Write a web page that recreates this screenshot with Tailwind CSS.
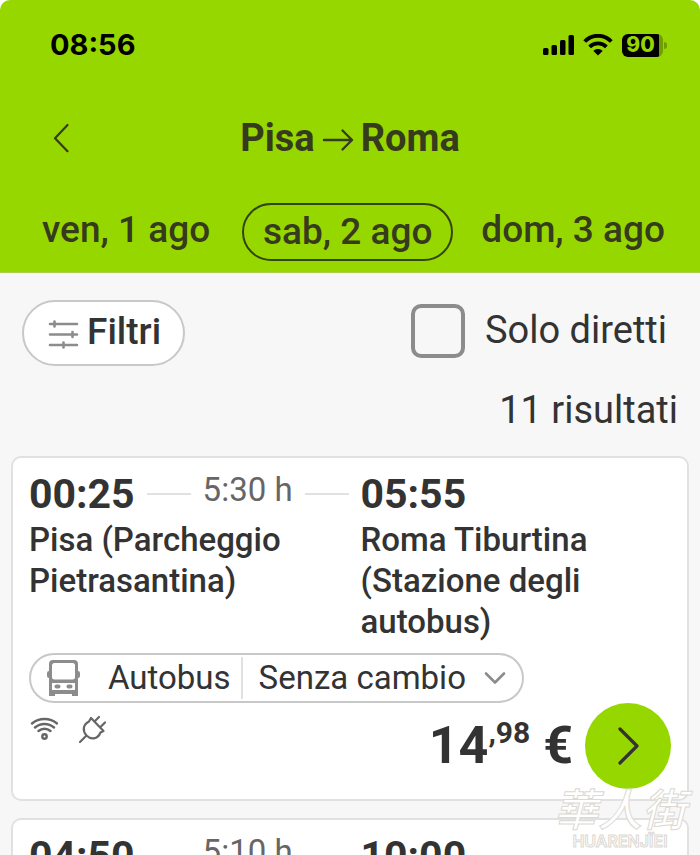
<!DOCTYPE html>
<html lang="it">
<head>
  <meta charset="UTF-8" />
  <meta name="viewport" content="width=device-width, initial-scale=1" />
  <title>Pisa → Roma | Risultati</title>
  <script src="https://cdn.jsdelivr.net/npm/@tailwindcss/browser@4"></script>
</head>
<body class="relative h-screen overflow-hidden bg-white font-[Roboto,sans-serif] text-[#333]">

<div class="min-h-screen bg-[#f7f7f7] rounded-t-[10px]">
  <header class="bg-[#97d700] rounded-t-[10px] border-b border-[#a9cf4c] pb-[11px] text-[#353b1c]">
    <!-- Status bar -->
    <div class="flex items-center justify-between h-[90px] pl-[50px] pr-[33px] text-black">
      <span class="font-[Inter,sans-serif] text-[29px] font-bold">08:56</span>
      <div class="flex items-center">
        <svg class="w-8 h-[22px] mr-2" viewBox="0 0 32 22" fill="currentColor">
          <rect x="0" y="14" width="5.5" height="7" rx="1.5" />
          <rect x="8.500" y="11" width="5.5" height="10" rx="1.5" />
          <rect x="17" y="6" width="5.5" height="15" rx="1.5" />
          <rect x="25.500" y="1" width="5.500" height="20" rx="1.5" />
        </svg>
        <svg class="w-[30px] h-[22px] mr-[9px]" viewBox="0 0 30 22" fill="none" stroke="currentColor" stroke-width="3.8">
          <path d="M1.700 7.500C9-.2 21-.2 28.300 7.500" />
          <path d="M6.600 12.900C11.300 8.200 18.700 8.200 23.400 12.900" />
          <path d="M15 21.500l-4.600-4.600c2.500-2.500 6.700-2.500 9.200 0z" fill="currentColor" stroke="none" />
        </svg>
        <div class="flex items-center">
          <div class="flex items-center justify-center w-[41px] h-[23px] rounded-[6px] bg-linear-to-r from-black from-91% to-[#6f9e00] to-91% font-[Inter,sans-serif] text-[21px] font-extrabold text-[#97d700]">
            <span class="mr-1">90</span>
          </div>
          <div class="w-[3px] h-[7px] ml-px rounded-r-full bg-[#6f9e00]"></div>
        </div>
      </div>
    </div>

    <!-- Route -->
    <div class="grid grid-cols-[1fr_auto_1fr] items-center h-24 px-[50px]">
      <button type="button" aria-label="Indietro" class="justify-self-start">
        <svg class="w-5 h-[30px]" viewBox="0 0 20 30" fill="none" stroke="currentColor" stroke-width="2.200" stroke-linecap="round" stroke-linejoin="round"><path d="M17.500 2L5 15.200l12.500 13" /></svg>
      </button>
      <h1 class="flex items-center gap-[7px] text-[38px] leading-[48px] font-bold">
        Pisa
        <svg class="w-8 h-6 mt-1" viewBox="0 0 32 24" fill="none" stroke="currentColor" stroke-width="2.400" stroke-linecap="round" stroke-linejoin="round"><path d="M2 12h28M20.500 2.500L30 12l-9.500 9.500" /></svg>
        Roma
      </h1>
    </div>

    <!-- Days -->
    <nav class="flex items-start justify-between mt-[17px] pl-[42px] pr-[35px] text-[37px] leading-[54px] font-medium">
      <a href="#">ven, 1 ago</a>
      <a href="#" aria-current="date" class="ml-1 px-[19px] rounded-full border-2 border-[#33450f]">sab, 2 ago</a>
      <a href="#">dom, 3 ago</a>
    </nav>
  </header>

  <main class="px-[11px]">
    <div class="flex items-start justify-between mt-[27px] pl-[11px] pr-[22px]">
      <button type="button" class="flex items-center gap-2 h-[66px] pl-6 pr-[22px] pb-0.5 bg-white rounded-full border-2 border-[#c8c8c8] text-[37px] leading-[48px] font-medium">
        <svg class="w-[31px] h-[30px] mt-1" viewBox="0 0 31 30" fill="none" stroke="#8c8c8c" stroke-width="2.600" stroke-linecap="round"><path d="M2 5h27M2 15.500h27M2 26h27M6.500 2.500v5M24.500 13v5M15.500 23.500v5" /></svg>
        Filtri
      </button>
      <div class="flex items-center gap-5 pt-1">
        <input id="solo-diretti" type="checkbox" class="appearance-none w-[54px] h-[54px] rounded-[10px] border-4 border-[#8c8c8c] bg-[#f7f7f7] checked:bg-[#97d700]" />
        <label for="solo-diretti" class="pb-0.5 text-[38px] leading-[48px]">Solo diretti</label>
      </div>
    </div>

    <p class="mt-5 pr-[11px] text-right text-[38px] leading-[48px]">11 risultati</p>

    <div class="flex flex-col gap-[17px] mt-[22px]">
      <article class="px-4 pt-3 pb-[10px] bg-white rounded-[10px] border-2 border-[#e1e1e1]">
        <div class="grid grid-cols-[331fr_310fr] gap-y-px">
          <div class="flex items-center gap-3 pr-3">
            <span class="text-[41px] leading-[48px] font-bold">00:25</span>
            <span class="flex-1 h-0.5 bg-[#e1e1e1]"></span>
            <span class="pb-2 text-[33px] leading-[40px] text-[#666]">5:30 h</span>
            <span class="flex-1 h-0.5 bg-[#e1e1e1]"></span>
          </div>
          <span class="text-[41px] leading-[48px] font-bold">05:55</span>
          <p class="text-[33px] leading-[41px] font-medium">Pisa (Parcheggio Pietrasantina)</p>
          <p class="text-[33px] leading-[41px] font-medium">Roma Tiburtina (Stazione degli autobus)</p>
        </div>

        <button type="button" class="flex items-center h-[50px] mt-[11px] px-4 rounded-full border-2 border-[#c8c8c8] text-[33px] leading-[40px]">
          <svg class="w-[33px] h-[38px] mr-7" viewBox="0 0 33 38">
            <path fill="#8c8c8c" fill-rule="evenodd" d="M6 1h21q4 0 4 4v7q2 0 2 2v3q0 2-2 2v18h-6v-2H8v2H2V19q-2 0-2-2v-3q0-2 2-2V5q0-4 4-4zM7.500 4Q5 4 5 6.500V18q0 2.500 2.500 2.500h18q2.500 0 2.500-2.500V6.500Q28 4 25.500 4zM5 24v7h23v-7z" />
            <rect x="7.500" y="25.500" width="6" height="4" rx="2" fill="#8c8c8c" />
            <rect x="19.500" y="25.500" width="6" height="4" rx="2" fill="#8c8c8c" />
          </svg>
          <span>Autobus</span>
          <span class="w-0.5 h-[42px] ml-[10px] mr-4 bg-[#e1e1e1]"></span>
          <span>Senza cambio</span>
          <svg class="w-[22px] h-[14px] ml-[18px]" viewBox="0 0 22 14" fill="none" stroke="#8c8c8c" stroke-width="2.600" stroke-linecap="round" stroke-linejoin="round"><path d="M2 2.500l9 9 9-9" /></svg>
        </button>

        <div class="flex items-start justify-between">
          <div class="flex items-start gap-5 pt-3">
            <svg class="w-7 h-[26px] ml-px" viewBox="0 0 28 26" fill="none" stroke="#666" stroke-width="2.400" stroke-linecap="round" aria-label="Wi-Fi">
              <path d="M2 8.500c7-6 18-6 25 0M5 12.500c5.500-4.700 13.500-4.700 19 0M8.500 16c3.500-3 8.500-3 12 0" />
              <circle cx="14.500" cy="21.500" r="2.200" />
            </svg>
            <svg class="w-[29px] h-[29px]" viewBox="0 0 29 29" fill="none" stroke="#666" stroke-width="2.200" stroke-linecap="round" stroke-linejoin="round" aria-label="Presa elettrica">
              <path d="M2 27l6.500-6.500M13 3l12.500 13-3 1.500c-3 7.500-10 7-14 3-4-4.500-4-10.500 2.500-14zM16.500 6.500L21 2M22 12.500L27 7.500" />
            </svg>
          </div>
          <div class="flex items-center gap-3">
            <p class="text-[52px] leading-[60px] font-bold whitespace-nowrap">14<sup class="-top-5 text-[30px]">,98</sup> €</p>
            <button type="button" aria-label="Continua" class="flex items-center justify-center size-[86px] rounded-full bg-[#97d700]">
              <svg class="w-6 h-10" viewBox="0 0 24 40" fill="none" stroke="currentColor" stroke-width="3.200" stroke-linecap="round" stroke-linejoin="round"><path d="M4 3l17 17L4 37" /></svg>
            </button>
          </div>
        </div>
      </article>

      <article class="px-4 pt-3 pb-[10px] bg-white rounded-[10px] border-2 border-[#e1e1e1]">
        <div class="grid grid-cols-[331fr_310fr]">
          <div class="flex items-center gap-3 pr-3">
            <span class="text-[41px] leading-[48px] font-bold">04:50</span>
            <span class="flex-1 h-0.5 bg-[#e1e1e1]"></span>
            <span class="pb-2 text-[33px] leading-[40px] text-[#666]">5:10 h</span>
            <span class="flex-1 h-0.5 bg-[#e1e1e1]"></span>
          </div>
          <span class="text-[41px] leading-[48px] font-bold">10:00</span>
        </div>
      </article>
    </div>
  </main>
</div>

<!-- Watermark -->
<div class="absolute right-[14px] bottom-1.5 flex flex-col items-center text-white pointer-events-none [-webkit-text-stroke:1px_#dcd9d3]">
  <span class="font-['Noto_Sans_CJK_TC',sans-serif] text-[44px] leading-[52px] font-medium italic">華人街</span>
  <span class="font-[Inter,sans-serif] text-[16px] leading-[16px] font-semibold">HUARENJÏEI</span>
</div>

</body>
</html>
